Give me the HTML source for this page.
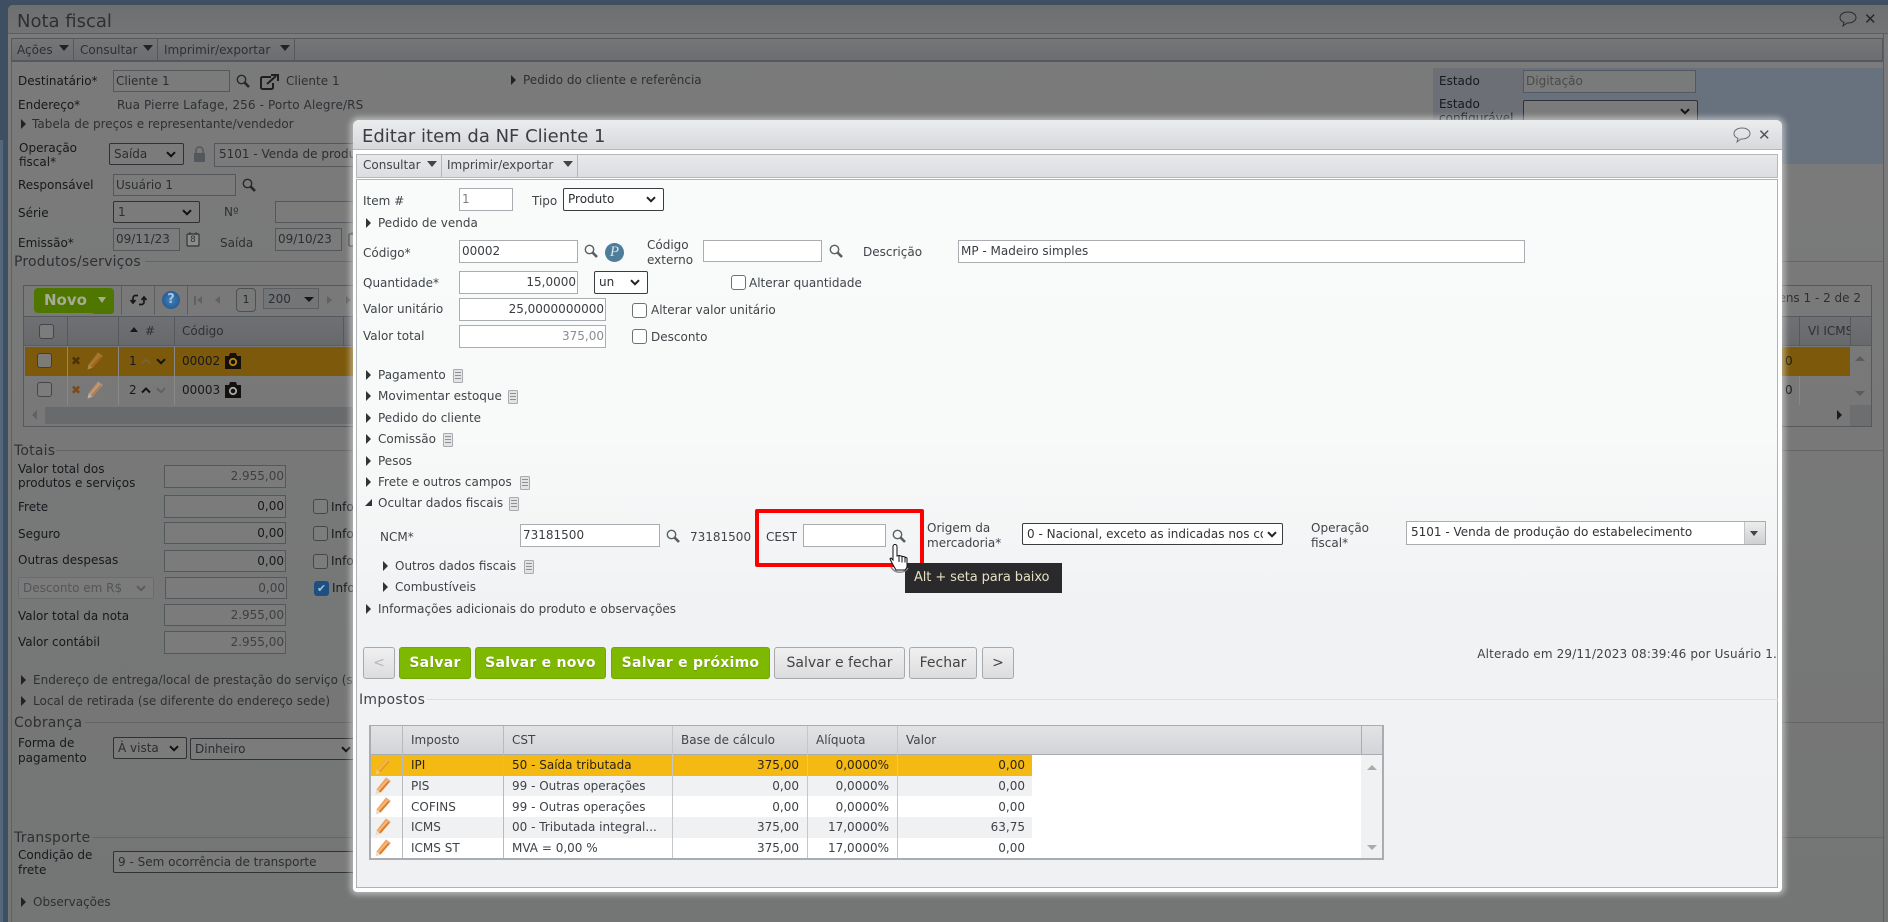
<!DOCTYPE html>
<html lang="pt"><head><meta charset="utf-8"><title>Nota fiscal</title>
<style>
html,body{margin:0;padding:0}
body{width:1888px;height:922px;overflow:hidden;position:relative;background:#3f4f62;font:12px/16px "DejaVu Sans","Liberation Sans",sans-serif;letter-spacing:0;color:#16191c}
div,span,svg{position:absolute;box-sizing:border-box;white-space:nowrap}
#w{left:8px;top:5px;width:1880px;height:917px;background:linear-gradient(#7b7b7b,#747575);overflow:hidden;border-radius:5px 0 0 0}
#w>*{margin-left:-8px;margin-top:-5px}
.hd{left:8px;top:5px;width:1880px;height:29px;background:linear-gradient(#6e6f70,#737475);border-bottom:1px solid #5b5d5f}
.tb{left:11px;top:38px;width:1872px;height:24px;background:linear-gradient(#757678,#6c6d70);border:1px solid #55585c;border-bottom-width:2px}
.vl{width:1px;background:#55585c}
.g{color:#2d3033}
.f{background:#7b7b7b;border:1px solid #54585c;color:#2b2e31;padding:2px 0 0 2px;height:22px;line-height:16px}
.fr{text-align:right;padding:2px 1px 0 0;color:#3d4043}
.s{background:#7b7b7b;border:1px solid #2f3134;border-radius:2px;color:#2b2e31;padding:2px 0 0 4px;height:22px}
.ttl{font-size:14px;color:#2d3033;letter-spacing:.2px}
.ln{height:1px;background:#626467}
.cb{width:15px;height:15px;border:1px solid #43474b;border-radius:3px;background:#7c7c7c}
.ar,.a2{width:0;height:0;border-left:5px solid #222;border-top:5px solid transparent;border-bottom:5px solid transparent;transform:translateY(-1px)}
.a2{border-left-color:#333}
.ta{width:0;height:0;border-left:5px solid transparent;border-right:5px solid transparent;border-top:6px solid #222}
.hr{background:linear-gradient(#6f7073,#68696c);height:30px;top:316px}
#m{left:353px;top:120px;width:1429px;height:772px;background:#fff;border-radius:6px 6px 4px 4px;box-shadow:0 0 6px 3px rgba(255,255,255,.45);z-index:2}
#m>*{margin-left:-353px;margin-top:-120px}
.mh{left:353px;top:120px;width:1429px;height:30px;background:linear-gradient(#ebecee,#d8d9dd);border-bottom:1px solid #b5b8bb;border-radius:6px 6px 0 0}
.mt{left:356px;top:154px;width:1422px;height:24px;background:linear-gradient(#e8e9eb,#dcdde1);border:1px solid #b5b8bb;color:#4a4e52}
.mc{left:356px;top:179px;width:1422px;height:709px;background:linear-gradient(#f9fbfa,#f8faf9 35%,#f1f2f4 60%,#f0f1f3);border:1px solid #b0b3b6}
.l{color:#404448}
.n{background:#fff;border:1px solid #a9acb1;color:#3a3e42;padding:2px 0 0 2px;height:23px}
.nr{text-align:right;padding:2px 1px 0 0}
.ns{background:#fff;border:1px solid #3a3d40;border-radius:2px;color:#2c2f33;padding:2px 0 0 4px;height:23px}
.c{width:15px;height:15px;border:1px solid #6d7074;border-radius:3px;background:#fff}
.gb{top:647px;height:32px;background:#7fb800;border:1px solid #74a800;border-radius:3px;color:#fff;font:bold 14px/30px "DejaVu Sans",sans-serif;letter-spacing:.25px;text-align:center;text-shadow:0 1px 1px rgba(0,0,0,.2)}
.wb{top:647px;height:32px;background:linear-gradient(#f0f0f1,#dcdcde);border:1px solid #a8a9ac;border-radius:3px;color:#444;font:14px/30px "DejaVu Sans",sans-serif;letter-spacing:0;text-align:center}
.th{top:726px;height:29px;background:linear-gradient(#e2e3e5,#d3d4d8);line-height:27px;color:#4a4e52}
.r{left:370px;width:662px;height:21px}
.d{color:#3e4246}
.sep{width:1px;background:#c5c7ca}
</style></head><body>
<svg width="0" height="0" style="left:0;top:0"><defs>
<symbol id="sr" viewBox="0 0 14 14"><circle cx="5.5" cy="5.5" r="4.2" fill="none" stroke="currentColor" stroke-width="1.4"/><path d="M8.7 8.7L13 13" stroke="currentColor" stroke-width="2.6"/></symbol>
<symbol id="ch" viewBox="0 0 10 7"><path d="M1 1.2l4 4 4-4" fill="none" stroke="currentColor" stroke-width="2"/></symbol>
<symbol id="pn" viewBox="0 0 16 18"><path d="M11 .5L15.800 4 5.800 15.500 1.500 17 1.500 12.500z" fill="#f0a058"/><path d="M.5 17.800L1.500 12.500 5.800 15.500z" fill="#e8dfcf"/><path d="M3 13.500L12.800 2.500" stroke="#f7c08a" stroke-width="1.200"/><path d="M4.600 15L14.300 4" stroke="#d9751f" stroke-width="1.200"/><path d="M11 .5L15.800 4 14.800 5.100 10 1.700z" fill="#e2ad82"/></symbol>
<symbol id="dc" viewBox="0 0 10 14"><rect x=".5" y=".5" width="9" height="13" rx="1" fill="#e2e3e4" stroke="#a8aaad"/><path d="M2 3.500h6M2 6.500h6M2 9.500h6" stroke="#8e9094"/></symbol>
<symbol id="cam" viewBox="0 0 18 18"><path d="M1 4h4l1-3h6l1 3h4v13H1z" fill="#14100e"/><circle cx="9" cy="10" r="3.200" fill="none" stroke="currentColor" stroke-width="1.800"/></symbol>
<symbol id="cal" viewBox="0 0 14 15"><rect x="1" y="2" width="12" height="12" rx="1" fill="#8c8c8c" stroke="#333" stroke-width="1.200"/><path d="M4 0v3M10 0v3" stroke="#333"/></symbol>
</defs></svg>

<div style="left:0;top:140px;width:3px;height:782px;background:#55677a"></div>
<div id="w">
<div class="hd"></div>
<div class="g" style="left:17px;top:11px;font-size:18px;line-height:22px;letter-spacing:0">Nota fiscal</div>
<svg style="left:1839px;top:11px" width="18" height="16" viewBox="0 0 18 16"><path d="M9 1c4.500 0 8 2.300 8 5.500S13.500 12 9 12l-1 0-4 3 1-3.700C2.600 10.500 1 8.700 1 6.500 1 3.300 4.500 1 9 1z" fill="none" stroke="#2a2c2e"/></svg>
<div style="left:1864px;top:10px;font:bold 15px/18px 'DejaVu Sans',sans-serif;color:#25272a">✕</div>
<div class="tb"></div>
<div class="g" style="left:17px;top:42px">Ações</div><div class="ta" style="left:59px;top:45px"></div>
<div class="vl" style="left:73px;top:39px;height:22px"></div>
<div class="g" style="left:80px;top:42px">Consultar</div><div class="ta" style="left:143px;top:45px"></div>
<div class="vl" style="left:157px;top:39px;height:22px"></div>
<div class="g" style="left:164px;top:42px">Imprimir/exportar</div><div class="ta" style="left:280px;top:45px"></div>
<div class="vl" style="left:294px;top:39px;height:22px"></div>

<div style="left:18px;top:73px">Destinatário*</div>
<div class="f" style="left:113px;top:70px;width:117px">Cliente 1</div>
<svg style="left:236px;top:74px;color:#26282a" width="14" height="14"><use href="#sr"/></svg>
<svg style="left:260px;top:74px" width="19" height="16" viewBox="0 0 19 16"><path d="M11 3H2.500A1.500 1.500 0 0 0 1 4.500v9A1.500 1.500 0 0 0 2.500 15h9a1.500 1.500 0 0 0 1.500-1.500V9M7 10L16 2M11 1h7v6" fill="none" stroke="#1d2022" stroke-width="2"/></svg>
<div class="g" style="left:286px;top:73px">Cliente 1</div>
<div class="ar" style="left:511px;top:76px"></div><div class="g" style="left:523px;top:72px">Pedido do cliente e referência</div>
<div style="left:18px;top:97px">Endereço*</div>
<div class="g" style="left:117px;top:97px;letter-spacing:.12px">Rua Pierre Lafage, 256 - Porto Alegre/RS</div>
<div class="ar" style="left:21px;top:120px"></div><div class="g" style="left:32px;top:116px">Tabela de preços e representante/vendedor</div>
<div style="left:19px;top:140px">Operação</div><div style="left:19px;top:154px">fiscal*</div>
<div class="s" style="left:109px;top:143px;width:75px;height:22px">Saída</div>
<svg style="left:166px;top:151px;color:#111" width="10" height="7"><use href="#ch"/></svg>
<svg style="left:193px;top:146px" width="13" height="16" viewBox="0 0 13 16"><path d="M3 7V4.500a3.500 3.500 0 0 1 7 0V7" fill="none" stroke="#55585b" stroke-width="1.500"/><rect x="1" y="7" width="11" height="9" fill="#55585b"/></svg>
<div class="f" style="left:214px;top:143px;width:150px;height:24px;padding-left:4px">5101 - Venda de produção do estabelecimento</div>
<div style="left:18px;top:177px">Responsável</div>
<div class="f" style="left:113px;top:174px;width:123px">Usuário 1</div>
<svg style="left:242px;top:178px;color:#26282a" width="14" height="14"><use href="#sr"/></svg>
<div style="left:18px;top:205px">Série</div>
<div class="s" style="left:113px;top:201px;width:87px">1</div>
<svg style="left:182px;top:209px;color:#111" width="10" height="7"><use href="#ch"/></svg>
<div class="g" style="left:224px;top:204px">Nº</div>
<div class="f" style="left:275px;top:201px;width:90px"></div>
<div style="left:18px;top:235px">Emissão*</div>
<div class="f" style="left:113px;top:228px;width:67px;height:23px">09/11/23</div>
<svg style="left:186px;top:232px" width="14" height="15"><use href="#cal"/></svg>
<div class="g" style="left:186px;top:232px;width:14px;text-align:center;font-size:9px;line-height:17px">8</div>
<div class="g" style="left:220px;top:235px">Saída</div>
<div class="f" style="left:275px;top:228px;width:67px;height:23px">09/10/23</div>
<svg style="left:348px;top:232px" width="14" height="15"><use href="#cal"/></svg>
<div class="ttl" style="left:14px;top:254px">Produtos/serviços</div><div class="ln" style="left:145px;top:261px;width:1738px"></div>

<div style="left:23px;top:285px;width:1849px;height:142px;border:1px solid #55585c"></div>
<div style="left:34px;top:288px;width:80px;height:25px;background:#4f7700;border-radius:4px"></div>
<div style="left:92px;top:300px;width:22px;height:14px;background:#4f7700;border-radius:0 0 3px 3px"></div>
<div style="left:44px;top:291px;font:bold 15px/18px 'DejaVu Sans',sans-serif;letter-spacing:0;color:#a7aa96">Novo</div>
<div style="left:98px;top:297px;border-left:4px solid transparent;border-right:4px solid transparent;border-top:6px solid #a8ad90"></div>
<div class="vl" style="left:121px;top:286px;height:29px;background:#5c5e61"></div>
<svg style="left:130px;top:292px" width="17" height="16" viewBox="0 0 17 16"><path d="M8 3.500H5.500A2.500 2.500 0 0 0 3 6v4M.5 8L3 11 5.500 8M9 12.500h2.500A2.500 2.500 0 0 0 14 10V6M11.500 8L14 5 16.500 8" fill="none" stroke="#15181a" stroke-width="1.700"/></svg>
<div class="vl" style="left:154px;top:286px;height:29px;background:#5c5e61"></div>
<div style="left:162px;top:291px;width:18px;height:18px;border-radius:50%;background:radial-gradient(#3f7fbc,#1f4f84);color:#a8c4dc;font:bold 13px/18px 'DejaVu Sans',sans-serif;text-align:center">?</div>
<div class="vl" style="left:187px;top:286px;height:29px;background:#5c5e61"></div>
<div style="left:194px;top:296px;width:2px;height:9px;background:#5f6264"></div><div style="left:197px;top:296px;border-right:5px solid #5f6264;border-top:4.500px solid transparent;border-bottom:4.500px solid transparent"></div>
<div style="left:215px;top:296px;border-right:5px solid #5f6264;border-top:4.500px solid transparent;border-bottom:4.500px solid transparent"></div>
<div style="left:236px;top:288px;width:20px;height:24px;border:1px solid #4e5154;border-radius:4px;text-align:center;line-height:22px;font-size:11px;color:#25282b">1</div>
<div class="f" style="left:263px;top:288px;width:56px;height:21px;padding-left:4px;background:#747576;border-color:#5c5f62">200</div>
<div style="left:304px;top:297px;border-left:5px solid transparent;border-right:5px solid transparent;border-top:5px solid #15181a"></div>
<div style="left:327px;top:296px;border-left:5px solid #5f6264;border-top:4.500px solid transparent;border-bottom:4.500px solid transparent"></div>
<div style="left:346px;top:296px;border-left:5px solid #5f6264;border-top:4.500px solid transparent;border-bottom:4.500px solid transparent"></div>

<div class="hr" style="left:24px;width:1847px;border-top:1px solid #55585c;border-bottom:1px solid #5a5c5f"></div>
<div class="cb" style="left:39px;top:324px"></div>
<div class="vl" style="left:67px;top:316px;height:30px"></div><div class="vl" style="left:118px;top:316px;height:30px"></div><div class="vl" style="left:174px;top:316px;height:30px"></div><div class="vl" style="left:343px;top:316px;height:30px"></div><div class="vl" style="left:1799px;top:316px;height:30px"></div><div class="vl" style="left:1850px;top:316px;height:30px"></div>
<div class="g" style="left:130px;top:327px;border-left:4px solid transparent;border-right:4px solid transparent;border-bottom:5px solid #16191c"></div>
<div class="g" style="left:145px;top:323px">#</div>
<div class="g" style="left:182px;top:323px">Código</div>
<div class="g" style="left:1808px;top:323px;width:42px;overflow:hidden">Vl ICMS</div>

<div style="left:25px;top:347px;width:1825px;height:29px;background:#7d5a0b"></div>
<div class="cb" style="left:37px;top:353px;background:#7d7b76;border-color:#3f3f3f"></div>
<div style="left:71px;top:353px;font:bold 12px/16px 'DejaVu Sans',sans-serif;color:#4d3208">✖</div>
<svg style="left:87px;top:352px;opacity:.35" width="16" height="18"><use href="#pn"/></svg>
<div style="left:129px;top:353px">1</div>
<svg style="left:141px;top:358px;color:#75643a" width="10" height="7" viewBox="0 0 10 7"><path d="M1 5.500l4-4 4 4" fill="none" stroke="currentColor" stroke-width="1.600"/></svg>
<svg style="left:156px;top:358px;color:#141414" width="10" height="7"><use href="#ch"/></svg>
<div style="left:182px;top:353px">00002</div>
<svg style="left:224px;top:352px;color:#b68610" width="18" height="18"><use href="#cam"/></svg>
<div class="cb" style="left:37px;top:382px"></div>
<div style="left:71px;top:382px;font:bold 12px/16px 'DejaVu Sans',sans-serif;color:#7a4a1b">✖</div>
<svg style="left:87px;top:381px;opacity:.55" width="16" height="18"><use href="#pn"/></svg>
<div style="left:129px;top:382px">2</div>
<svg style="left:141px;top:387px;color:#141414" width="10" height="7" viewBox="0 0 10 7"><path d="M1 5.500l4-4 4 4" fill="none" stroke="currentColor" stroke-width="2"/></svg>
<svg style="left:156px;top:387px;color:#5d6266" width="10" height="7"><use href="#ch"/></svg>
<div style="left:182px;top:382px">00003</div>
<svg style="left:224px;top:381px;color:#a9a9a9" width="18" height="18"><use href="#cam"/></svg>
<div class="vl" style="left:67px;top:347px;height:58px;background:#888"></div><div class="vl" style="left:118px;top:347px;height:58px;background:#888"></div><div class="vl" style="left:174px;top:347px;height:58px;background:#888"></div>
<div style="left:32px;top:410px;border-right:5px solid #5f6264;border-top:5px solid transparent;border-bottom:5px solid transparent"></div>
<div style="left:45px;top:407px;width:320px;height:17px;background:#696a6b"></div>
<div style="left:1837px;top:410px;border-left:5px solid #1a1c1e;border-top:5px solid transparent;border-bottom:5px solid transparent"></div>
<div style="left:1850px;top:405px;width:21px;height:21px;background:#6d6e6f"></div>
<div style="left:1855px;top:356px;border-left:5px solid transparent;border-right:5px solid transparent;border-bottom:5px solid #595c5e"></div>
<div style="left:1855px;top:391px;border-left:5px solid transparent;border-right:5px solid transparent;border-top:5px solid #595c5e"></div>
<div class="g" style="left:1680px;top:290px;width:181px;text-align:right">Itens 1 - 2 de 2</div>
<div style="left:1785px;top:353px;color:#1e1a10">0</div><div style="left:1785px;top:382px">0</div>
<div class="vl" style="left:1799px;top:376px;height:29px;background:#888"></div>

<div style="left:1433px;top:68px;width:450px;height:96px;background:#68727e"></div>
<div style="left:1433px;top:68px;width:90px;height:96px;background:#6c7076"></div>
<div style="left:1439px;top:73px">Estado</div>
<div class="f" style="left:1523px;top:70px;width:173px;height:23px;color:#4b4a44;padding-left:2px;background:#797a7b">Digitação</div>
<div style="left:1439px;top:96px">Estado</div><div style="left:1439px;top:110px">configurável</div>
<div class="s" style="left:1523px;top:100px;width:175px;height:24px"></div>
<svg style="left:1680px;top:108px;color:#111" width="10" height="7"><use href="#ch"/></svg>

<div class="ttl" style="left:14px;top:443px">Totais</div><div class="ln" style="left:56px;top:450px;width:1827px"></div>
<div style="left:18px;top:461px">Valor total dos</div><div style="left:18px;top:475px">produtos e serviços</div>
<div class="f fr" style="left:164px;top:465px;width:122px;height:23px">2.955,00</div>
<div style="left:18px;top:499px">Frete</div><div class="f fr" style="left:164px;top:495px;width:122px;height:23px;color:#16191c">0,00</div><div class="cb" style="left:313px;top:499px"></div><div style="left:331px;top:499px">Informar</div>
<div style="left:18px;top:526px">Seguro</div><div class="f fr" style="left:164px;top:522px;width:122px;color:#16191c">0,00</div><div class="cb" style="left:313px;top:526px"></div><div style="left:331px;top:526px">Informar</div>
<div style="left:18px;top:552px">Outras despesas</div><div class="f fr" style="left:164px;top:550px;width:122px;color:#16191c">0,00</div><div class="cb" style="left:313px;top:554px"></div><div style="left:331px;top:553px">Informar</div>
<div class="s" style="left:18px;top:577px;width:136px;border-color:#6a6c6f;color:#53565a">Desconto em R$</div>
<svg style="left:136px;top:585px;color:#595c5f" width="10" height="7"><use href="#ch"/></svg>
<div class="f fr" style="left:165px;top:577px;width:122px">0,00</div>
<div class="cb" style="left:314px;top:581px;background:#1f4f80;border-color:#1f4f80;color:#9cc0dd;font-size:11px;line-height:13px;text-align:center">✔</div><div style="left:332px;top:580px">Informar</div>
<div style="left:18px;top:608px">Valor total da nota</div><div class="f fr" style="left:164px;top:604px;width:122px">2.955,00</div>
<div style="left:18px;top:634px">Valor contábil</div><div class="f fr" style="left:164px;top:631px;width:122px;height:23px">2.955,00</div>
<div class="ar" style="left:21px;top:676px"></div><div class="g" style="left:33px;top:672px">Endereço de entrega/local de prestação do serviço (se diferente do endereço sede)</div>
<div class="ar" style="left:21px;top:697px"></div><div class="g" style="left:33px;top:693px">Local de retirada (se diferente do endereço sede)</div>
<div class="ttl" style="left:14px;top:715px">Cobrança</div><div class="ln" style="left:85px;top:722px;width:1798px"></div>
<div style="left:18px;top:735px">Forma de</div><div style="left:18px;top:750px">pagamento</div>
<div class="s" style="left:113px;top:737px;width:74px">À vista</div>
<svg style="left:169px;top:745px;color:#111" width="10" height="7"><use href="#ch"/></svg>
<div class="s" style="left:190px;top:738px;width:170px">Dinheiro</div>
<svg style="left:341px;top:746px;color:#111" width="10" height="7"><use href="#ch"/></svg>
<div class="ttl" style="left:14px;top:830px">Transporte</div><div class="ln" style="left:93px;top:837px;width:1790px"></div>
<div style="left:18px;top:847px">Condição de</div><div style="left:18px;top:862px">frete</div>
<div class="s" style="left:113px;top:851px;width:260px">9 - Sem ocorrência de transporte</div>
<div class="ar" style="left:21px;top:898px"></div><div class="g" style="left:33px;top:894px">Observações</div>
<div style="left:1883px;top:34px;width:1px;height:888px;background:#5b5d5f"></div>
<div style="left:11px;top:62px;width:1px;height:860px;background:#5f6164"></div>
</div>

<div id="m">
<div class="mh"></div>
<div style="left:362px;top:126px;font-size:18px;line-height:22px;letter-spacing:0;color:#3a3e42">Editar item da NF Cliente 1</div>
<svg style="left:1733px;top:127px" width="18" height="16" viewBox="0 0 18 16"><path d="M9 1c4.500 0 8 2.300 8 5.500S13.500 12 9 12l-1 0-4 3 1-3.700C2.600 10.500 1 8.700 1 6.500 1 3.300 4.500 1 9 1z" fill="none" stroke="#6c7074"/></svg>
<div style="left:1758px;top:126px;font:bold 15px/18px 'DejaVu Sans',sans-serif;color:#555">✕</div>
<div class="mt"></div>
<div class="l" style="left:363px;top:157px">Consultar</div><div class="ta" style="left:427px;top:161px;border-top-color:#444"></div>
<div class="vl" style="left:441px;top:155px;height:22px;background:#b5b8bb"></div>
<div class="l" style="left:447px;top:157px">Imprimir/exportar</div><div class="ta" style="left:563px;top:161px;border-top-color:#444"></div>
<div class="vl" style="left:577px;top:155px;height:22px;background:#b5b8bb"></div>
<div class="mc"></div>

<div class="l" style="left:363px;top:193px">Item #</div>
<div class="n" style="left:459px;top:188px;width:54px;color:#7d8084">1</div>
<div class="l" style="left:532px;top:193px">Tipo</div>
<div class="ns" style="left:563px;top:188px;width:101px">Produto</div>
<svg style="left:646px;top:196px;color:#222" width="10" height="7"><use href="#ch"/></svg>
<div class="a2" style="left:366px;top:219px"></div><div class="l" style="left:378px;top:215px">Pedido de venda</div>

<div class="l" style="left:363px;top:245px">Código*</div>
<div class="n" style="left:459px;top:240px;width:119px">00002</div>
<svg style="left:584px;top:244px;color:#5a5f64" width="14" height="14"><use href="#sr"/></svg>
<div style="left:605px;top:243px;width:19px;height:19px;border-radius:50%;background:#4e7d99;color:#d9e6ee;font:italic 15px/19px 'Liberation Serif',serif;text-align:center">P</div>
<div class="l" style="left:647px;top:237px">Código</div><div class="l" style="left:647px;top:252px">externo</div>
<div class="n" style="left:703px;top:240px;width:119px;height:22px"></div>
<svg style="left:829px;top:244px;color:#5a5f64" width="14" height="14"><use href="#sr"/></svg>
<div class="l" style="left:863px;top:244px">Descrição</div>
<div class="n" style="left:958px;top:240px;width:567px">MP - Madeiro simples</div>

<div class="l" style="left:363px;top:275px">Quantidade*</div>
<div class="n nr" style="left:459px;top:271px;width:119px">15,0000</div>
<div class="ns" style="left:594px;top:271px;width:54px">un</div>
<svg style="left:630px;top:279px;color:#222" width="10" height="7"><use href="#ch"/></svg>
<div class="c" style="left:731px;top:275px"></div><div class="l" style="left:749px;top:275px">Alterar quantidade</div>

<div class="l" style="left:363px;top:301px">Valor unitário</div>
<div class="n nr" style="left:459px;top:298px;width:147px">25,0000000000</div>
<div class="c" style="left:632px;top:303px"></div><div class="l" style="left:651px;top:302px">Alterar valor unitário</div>

<div class="l" style="left:363px;top:328px">Valor total</div>
<div class="n nr" style="left:459px;top:325px;width:147px;color:#8a8d90">375,00</div>
<div class="c" style="left:632px;top:329px"></div><div class="l" style="left:651px;top:329px">Desconto</div>

<div class="a2" style="left:366px;top:371px"></div><div class="l" style="left:378px;top:367px">Pagamento</div><svg style="left:453px;top:369px" width="10" height="14"><use href="#dc"/></svg>
<div class="a2" style="left:366px;top:392px"></div><div class="l" style="left:378px;top:388px">Movimentar estoque</div><svg style="left:508px;top:390px" width="10" height="14"><use href="#dc"/></svg>
<div class="a2" style="left:366px;top:414px"></div><div class="l" style="left:378px;top:410px">Pedido do cliente</div>
<div class="a2" style="left:366px;top:435px"></div><div class="l" style="left:378px;top:431px">Comissão</div><svg style="left:443px;top:433px" width="10" height="14"><use href="#dc"/></svg>
<div class="a2" style="left:366px;top:457px"></div><div class="l" style="left:378px;top:453px">Pesos</div>
<div class="a2" style="left:366px;top:478px"></div><div class="l" style="left:378px;top:474px">Frete e outros campos</div><svg style="left:520px;top:476px" width="10" height="14"><use href="#dc"/></svg>
<div style="left:365px;top:499px;border-bottom:7px solid #333;border-left:7px solid transparent"></div><div class="l" style="left:378px;top:495px">Ocultar dados fiscais</div><svg style="left:509px;top:497px" width="10" height="14"><use href="#dc"/></svg>

<div class="l" style="left:380px;top:529px">NCM*</div>
<div class="n" style="left:520px;top:524px;width:140px">73181500</div>
<svg style="left:666px;top:529px;color:#5a5f64" width="14" height="14"><use href="#sr"/></svg>
<div class="l" style="left:690px;top:529px">73181500</div>
<div style="left:766px;top:529px;color:#3a3e42">CEST</div>
<div class="n" style="left:803px;top:524px;width:83px"></div>
<svg style="left:892px;top:529px;color:#5a5f64" width="14" height="14"><use href="#sr"/></svg>
<div class="l" style="left:927px;top:520px">Origem da</div><div class="l" style="left:927px;top:535px">mercadoria*</div>
<div class="ns" style="left:1022px;top:523px;width:261px;height:22px;overflow:hidden;color:#333"><span style="position:static;display:block;width:236px;overflow:hidden">0 - Nacional, exceto as indicadas nos códigos 3, 4, 5 e 8</span></div>
<svg style="left:1267px;top:531px;color:#222" width="10" height="7"><use href="#ch"/></svg>
<div class="l" style="left:1311px;top:520px">Operação</div><div class="l" style="left:1311px;top:535px">fiscal*</div>
<div class="n" style="left:1406px;top:521px;width:360px;height:24px;padding-left:4px;color:#2f3337">5101 - Venda de produção do estabelecimento</div>
<div style="left:1744px;top:522px;width:21px;height:22px;background:linear-gradient(#eceded,#cfd0d2);border-left:1px solid #c0c2c4"></div>
<div style="left:1750px;top:531px;border-left:4px solid transparent;border-right:4px solid transparent;border-top:5px solid #444"></div>

<div class="a2" style="left:383px;top:562px"></div><div class="l" style="left:395px;top:558px">Outros dados fiscais</div><svg style="left:524px;top:560px" width="10" height="14"><use href="#dc"/></svg>
<div class="a2" style="left:383px;top:583px"></div><div class="l" style="left:395px;top:579px">Combustíveis</div>
<div class="a2" style="left:366px;top:605px"></div><div class="l" style="left:378px;top:601px">Informações adicionais do produto e observações</div>

<div class="wb" style="left:363px;width:32px;color:#b5b7b9">&lt;</div>
<div class="gb" style="left:399px;width:72px">Salvar</div>
<div class="gb" style="left:475px;width:131px">Salvar e novo</div>
<div class="gb" style="left:611px;width:159px">Salvar e próximo</div>
<div class="wb" style="left:774px;width:131px">Salvar e fechar</div>
<div class="wb" style="left:909px;width:68px">Fechar</div>
<div class="wb" style="left:982px;width:32px">&gt;</div>
<div class="l" style="left:1447px;top:646px;width:330px;text-align:right;letter-spacing:.15px">Alterado em 29/11/2023 08:39:46 por Usuário 1.</div>
<div class="l" style="left:359px;top:692px;font-size:14px;letter-spacing:.3px">Impostos</div>
<div style="left:427px;top:699px;width:1351px;height:1px;background:#dcdee0"></div>

<div style="left:369px;top:725px;width:1015px;height:135px;background:#fff;border:2px solid #a9acb1"></div>
<div class="th" style="left:371px;width:1011px;border-bottom:1px solid #a9acb1"></div>
<div class="l" style="left:411px;top:732px">Imposto</div><div class="l" style="left:512px;top:732px">CST</div><div class="l" style="left:681px;top:732px">Base de cálculo</div><div class="l" style="left:816px;top:732px">Alíquota</div><div class="l" style="left:906px;top:732px">Valor</div>
<div class="r" style="left:371px;top:755px;width:661px;background:#f5b914"></div>
<div class="r" style="left:371px;top:776px;width:661px;height:20px;background:#f0f1f3"></div>
<div class="r" style="left:371px;top:817px;width:661px;background:#f0f1f3"></div>
<div style="left:1361px;top:755px;width:21px;height:103px;background:#f0f1f2"></div>
<div class="sep" style="left:402px;top:726px;height:132px;background:#b8babd"></div><div class="sep" style="left:503px;top:726px;height:132px;background:#b8babd"></div><div class="sep" style="left:672px;top:726px;height:132px;background:#c5c7ca"></div><div class="sep" style="left:807px;top:726px;height:132px;background:#c5c7ca"></div><div class="sep" style="left:897px;top:726px;height:132px;background:#c5c7ca"></div><div class="sep" style="left:1361px;top:726px;height:29px;background:#a9acb1"></div>
<div style="left:1367px;top:765px;border-left:5px solid transparent;border-right:5px solid transparent;border-bottom:5px solid #a9abae"></div>
<div style="left:1367px;top:845px;border-left:5px solid transparent;border-right:5px solid transparent;border-top:5px solid #a9abae"></div>

<svg style="left:375px;top:757px;opacity:.45" width="16" height="18"><use href="#pn"/></svg>
<svg style="left:375px;top:777px" width="16" height="18"><use href="#pn"/></svg>
<svg style="left:375px;top:797px" width="16" height="18"><use href="#pn"/></svg>
<svg style="left:375px;top:818px" width="16" height="18"><use href="#pn"/></svg>
<svg style="left:375px;top:839px" width="16" height="18"><use href="#pn"/></svg>
<div style="left:411px;top:757px;color:#2a2416">IPI</div><div style="left:512px;top:757px;color:#2a2416">50 - Saída tributada</div><div style="left:672px;top:757px;width:127px;text-align:right;color:#2a2416">375,00</div><div style="left:807px;top:757px;width:82px;text-align:right;color:#2a2416">0,0000%</div><div style="left:897px;top:757px;width:128px;text-align:right;color:#2a2416">0,00</div>
<div class="d" style="left:411px;top:778px">PIS</div><div class="d" style="left:512px;top:778px">99 - Outras operações</div><div class="d" style="left:672px;top:778px;width:127px;text-align:right">0,00</div><div class="d" style="left:807px;top:778px;width:82px;text-align:right">0,0000%</div><div class="d" style="left:897px;top:778px;width:128px;text-align:right">0,00</div>
<div class="d" style="left:411px;top:799px">COFINS</div><div class="d" style="left:512px;top:799px">99 - Outras operações</div><div class="d" style="left:672px;top:799px;width:127px;text-align:right">0,00</div><div class="d" style="left:807px;top:799px;width:82px;text-align:right">0,0000%</div><div class="d" style="left:897px;top:799px;width:128px;text-align:right">0,00</div>
<div class="d" style="left:411px;top:819px">ICMS</div><div class="d" style="left:512px;top:819px">00 - Tributada integral...</div><div class="d" style="left:672px;top:819px;width:127px;text-align:right">375,00</div><div class="d" style="left:807px;top:819px;width:82px;text-align:right">17,0000%</div><div class="d" style="left:897px;top:819px;width:128px;text-align:right">63,75</div>
<div class="d" style="left:411px;top:840px">ICMS ST</div><div class="d" style="left:512px;top:840px">MVA = 0,00 %</div><div class="d" style="left:672px;top:840px;width:127px;text-align:right">375,00</div><div class="d" style="left:807px;top:840px;width:82px;text-align:right">17,0000%</div><div class="d" style="left:897px;top:840px;width:128px;text-align:right">0,00</div>

<div style="left:755px;top:509px;width:169px;height:58px;border:4px solid #f00;border-radius:2px"></div>
<div style="left:905px;top:563px;width:157px;height:30px;background:#2a2a2d;color:#e4dfc0;line-height:30px;padding-left:9px;font-size:13px;letter-spacing:-.1px">Alt + seta para baixo</div>
<svg style="left:888px;top:543px" width="24" height="34" viewBox="0 0 24 34"><path d="M3 24a10 10 0 0 0 17 1" fill="none" stroke="#8a8c8f" stroke-width="1.500"/><path d="M5 3.500a2 2 0 0 1 4 0V13l2-.5 2 .5 2 .5 2 .5 2 1v8c0 2-1 3-2 4H8l-4-7-2-4 1-1 2 2z" fill="#fff" stroke="#111"/><path d="M11 13v6M14 13.500v6M17 14.500v5" stroke="#111"/></svg>
</div>
</body></html>
